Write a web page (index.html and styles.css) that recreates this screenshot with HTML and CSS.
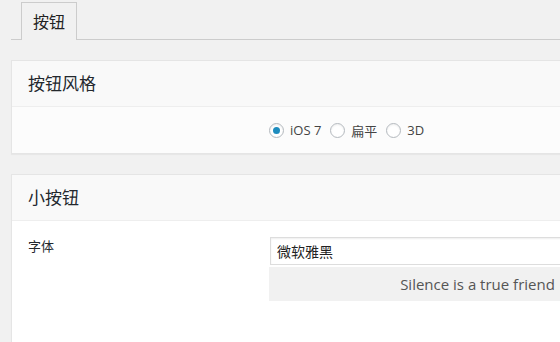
FILE: index.html
```html
<!DOCTYPE html>
<html lang="zh-CN">
<head>
    <meta charset="UTF-8">
    <meta name="viewport" content="width=device-width, initial-scale=1.0">
    <title>按钮设置</title>
    <link rel="stylesheet" href="styles.css">
</head>
<body>

    <!-- Pestañas -->
    <div class="nav-tabs">
        <a class="nav-tab active" href="#">按钮</a>
    </div>

    <div class="postbox first">
        <h2 class="postbox-title">按钮风格</h2>
        <div class="postbox-body">
            <div class="form-row center">
                <div class="form-label"></div>
                <div class="form-field radios">
                    <label class="radio"><input type="radio" name="style" checked> iOS 7</label>
                    <label class="radio"><input type="radio" name="style"> 扁平</label>
                    <label class="radio"><input type="radio" name="style"> 3D</label>
                </div>
            </div>
        </div>
    </div>

    <div class="postbox second">
        <h2 class="postbox-title">小按钮</h2>
        <div class="postbox-body white">
            <div class="form-row">
                <div class="form-label">字体</div>
                <div class="form-field">
                    <input class="text-input" type="text" value="微软雅黑">
                    <div class="preview">Silence is a true friend</div>
                </div>
            </div>
        </div>
    </div>

</body>
</html>
```

FILE: styles.css
```css
/* --- Estilos Generales --- */
body {
    font-family: "Open Sans", "Noto Sans CJK SC", sans-serif;
    background: #f1f1f1;
    color: #444;
    margin: 0;
    padding: 0 0 0 11px;
    width: 692px;
    overflow: hidden;
}

/* --- Pestañas --- */
.nav-tabs {
    display: flex;
    padding-left: 10px;
    border-bottom: 1px solid #ccc;
    padding-top: 2px;
}
.nav-tab {
    display: block;
    font-family: "Noto Sans CJK SC", sans-serif;
    font-size: 16px;
    line-height: 24px;
    padding: 6px 11px 7px 11px;
    border: 1px solid #ccc;
    border-bottom: none;
    color: #222;
    text-decoration: none;
    margin-bottom: -1px;
    background: #f1f1f1;
    height: 24px;
}

/* --- Cajas --- */
.postbox {
    background: #fcfcfc;
    border: 1px solid #e5e5e5;
    box-shadow: 0 1px 1px rgba(0, 0, 0, 0.04);
}
.postbox.first { margin-top: 20px; }
.postbox.second { margin-top: 20px; min-height: 200px; background: #fff; }

.postbox-title {
    margin: 0;
    font-family: "Noto Sans CJK SC", sans-serif;
    font-weight: 400;
    font-size: 17px;
    line-height: 24px;
    color: #23282d;
    padding: 10px 16px 11px;
    background: #f9f9f9;
    border-bottom: 1px solid #eee;
}

.postbox-body { padding: 0 16px; }
.postbox-body.white { background: #fff; padding-top: 15px; }

/* --- Filas del formulario --- */
.form-row {
    display: grid;
    grid-template-columns: 241px 1fr;
}
.form-row.center {
    height: 46px;
    align-items: center;
}
.form-label {
    font-family: "Noto Sans CJK SC", sans-serif;
    font-size: 13px;
    line-height: 20px;
    color: #23282d;
}

.radios { display: flex; align-items: center; gap: 9px; }
.radio {
    display: flex;
    align-items: center;
    gap: 6px;
    font-size: 13px;
    color: #444;
    font-family: "Open Sans", "Noto Sans CJK SC", sans-serif;
}
.radio input {
    -webkit-appearance: none;
    appearance: none;
    width: 15px;
    height: 15px;
    margin: 0;
    border: 1px solid #b4b9be;
    border-radius: 50%;
    background: #fff;
    box-shadow: inset 0 1px 2px rgba(0, 0, 0, 0.07);
    display: flex;
    align-items: center;
    justify-content: center;
    box-sizing: border-box;
}
.radio input:checked::before {
    content: "";
    width: 7px;
    height: 7px;
    border-radius: 50%;
    background: #1e8cbe;
}

.text-input {
    display: block;
    width: 100%;
    box-sizing: border-box;
    height: 28px;
    margin: 1px 0 0 1px;
    padding: 0 6px;
    border: 1px solid #ddd;
    box-shadow: inset 0 1px 2px rgba(0, 0, 0, 0.07);
    font-family: "Noto Sans CJK SC", sans-serif;
    font-size: 14px;
    color: #222;
    background: #fff;
}
.preview {
    margin-top: 2px;
    background: #f1f1f1;
    height: 34px;
    line-height: 34px;
    text-align: center;
    font-size: 15px;
    color: #555;
}
```
